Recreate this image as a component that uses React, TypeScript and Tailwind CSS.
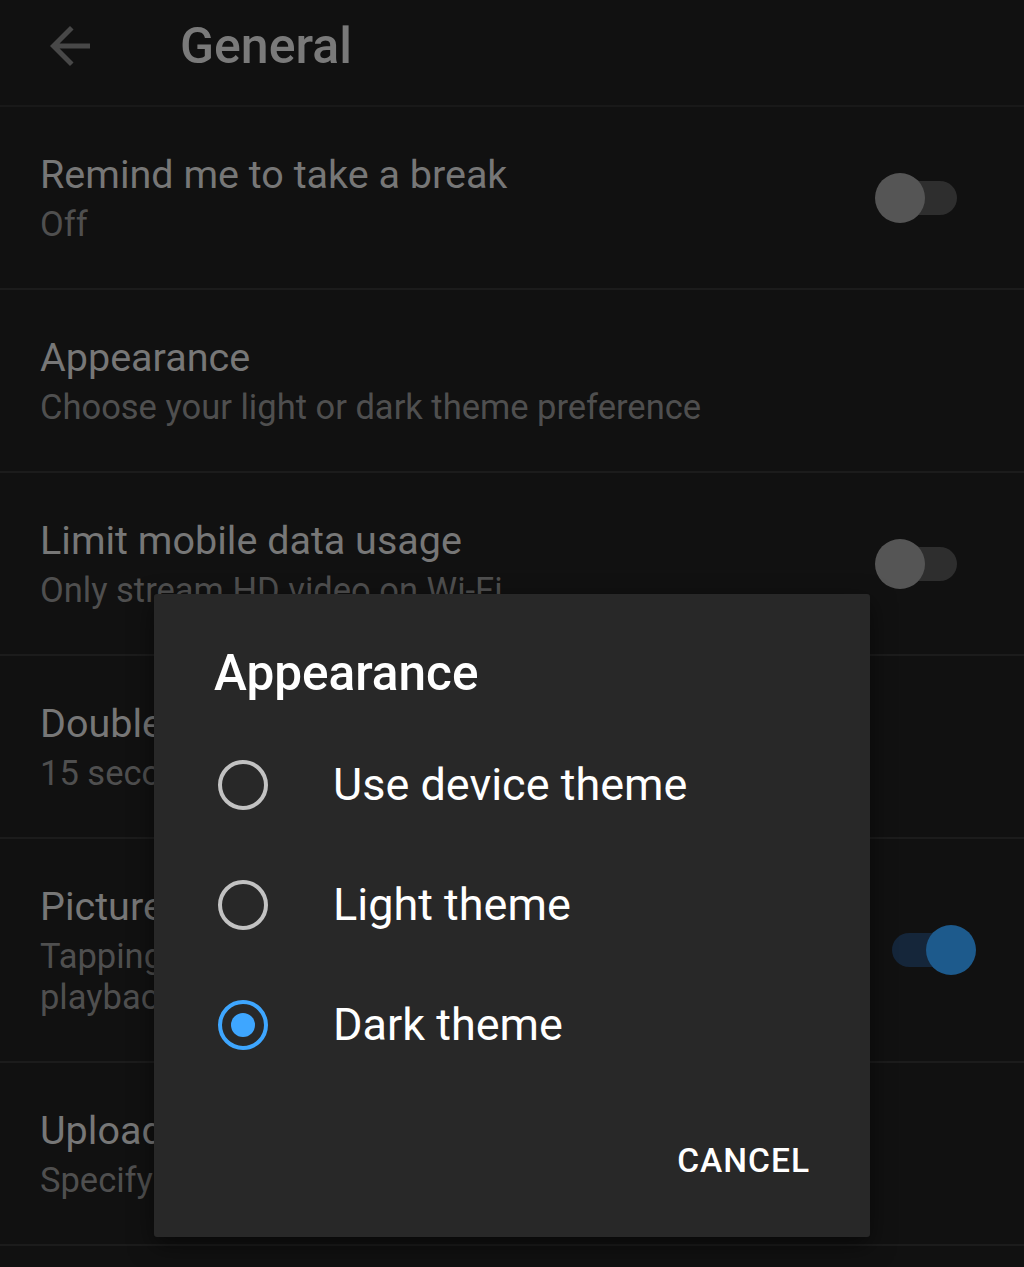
import { useState } from "react";

type Row = {
  title: string;
  lines: string[];
  toggle?: "on" | "off";
};

const rows: Row[] = [
  { title: "Remind me to take a break", lines: ["Off"], toggle: "off" },
  { title: "Appearance", lines: ["Choose your light or dark theme preference"] },
  { title: "Limit mobile data usage", lines: ["Only stream HD video on Wi-Fi"], toggle: "off" },
  { title: "Double-tap to seek", lines: ["15 seconds"] },
  {
    title: "Picture-in-picture",
    lines: ["Tapping home while watching a video will continue", "playback in picture-in-picture"],
    toggle: "on",
  },
  { title: "Uploads", lines: ["Specify network preferences for uploads"] },
];

const options = ["Use device theme", "Light theme", "Dark theme"];

function Toggle({ on }: { on: boolean }) {
  return (
    <div className="relative h-[50px] w-[101px] shrink-0">
      <div
        className={`absolute left-[17px] top-[8px] h-[34px] w-[65px] rounded-full ${
          on ? "bg-[#15263a]" : "bg-[#2e2e2e]"
        }`}
      />
      <div
        className={`absolute top-0 h-[50px] w-[50px] rounded-full ${
          on ? "left-[51px] bg-[#1d5a8c]" : "left-0 bg-[#555555]"
        }`}
      />
    </div>
  );
}

function Radio({ checked }: { checked: boolean }) {
  return (
    <div
      className={`flex h-[50px] w-[50px] shrink-0 items-center justify-center rounded-full border-[4.5px] ${
        checked ? "border-[#3ea6ff]" : "border-[#c2c2c2]"
      }`}
    >
      {checked && <div className="h-[24px] w-[24px] rounded-full bg-[#3ea6ff]" />}
    </div>
  );
}

export default function App() {
  const [theme, setTheme] = useState(2);

  return (
    <div className="relative min-h-[1267px] overflow-hidden bg-[#111111] font-['Roboto',sans-serif]">
      <div className="flex h-[107px] items-start border-b-2 border-[#191919] pl-[40px] pt-[16px]">
        <svg viewBox="0 0 24 24" className="h-[60px] w-[60px] fill-[#484848]">
          <path d="M20 11H7.83l5.59-5.59L12 4l-8 8 8 8 1.41-1.41L7.83 13H20v-2z" />
        </svg>
        <h1 className="ml-[80px] mt-[2px] text-[50px] font-medium leading-[56px] text-[#7a7a7a]">General</h1>
      </div>

      {rows.map((row) => (
        <div
          key={row.title}
          className="flex items-center justify-between border-b-2 border-[#1c1c1c] pl-[40px] pr-[48px]"
        >
          <div className="pb-[43px] pt-[46px]">
            <div className="text-[39.5px] leading-[44px] text-[#777777]">{row.title}</div>
            <div className="mt-[7px] text-[34.5px] leading-[41px] text-[#4f4f4f]">
              {row.lines.map((l) => (
                <div key={l} className="whitespace-nowrap">
                  {l}
                </div>
              ))}
            </div>
          </div>
          {row.toggle && <Toggle on={row.toggle === "on"} />}
        </div>
      ))}

      <div className="absolute left-[154px] top-[594px] flex h-[643px] w-[716px] flex-col rounded-[3px] bg-[#282828] shadow-[0_8px_24px_rgba(0,0,0,0.5)]">
        <h2 className="pl-[60px] pt-[51px] text-[49.5px] font-medium leading-[56px] text-white">Appearance</h2>
        <div className="mt-[24px] flex flex-col">
          {options.map((o, i) => (
            <button
              key={o}
              onClick={() => setTheme(i)}
              className="flex h-[120px] items-center pl-[64px] text-left"
            >
              <Radio checked={theme === i} />
              <span className="ml-[65px] text-[45px] leading-[50px] text-white">{o}</span>
            </button>
          ))}
        </div>
        <div className="mt-[56px] flex justify-end pr-[60px]">
          <button className="text-[33.5px] font-medium leading-[40px] tracking-[0.03em] text-white">CANCEL</button>
        </div>
      </div>
    </div>
  );
}
